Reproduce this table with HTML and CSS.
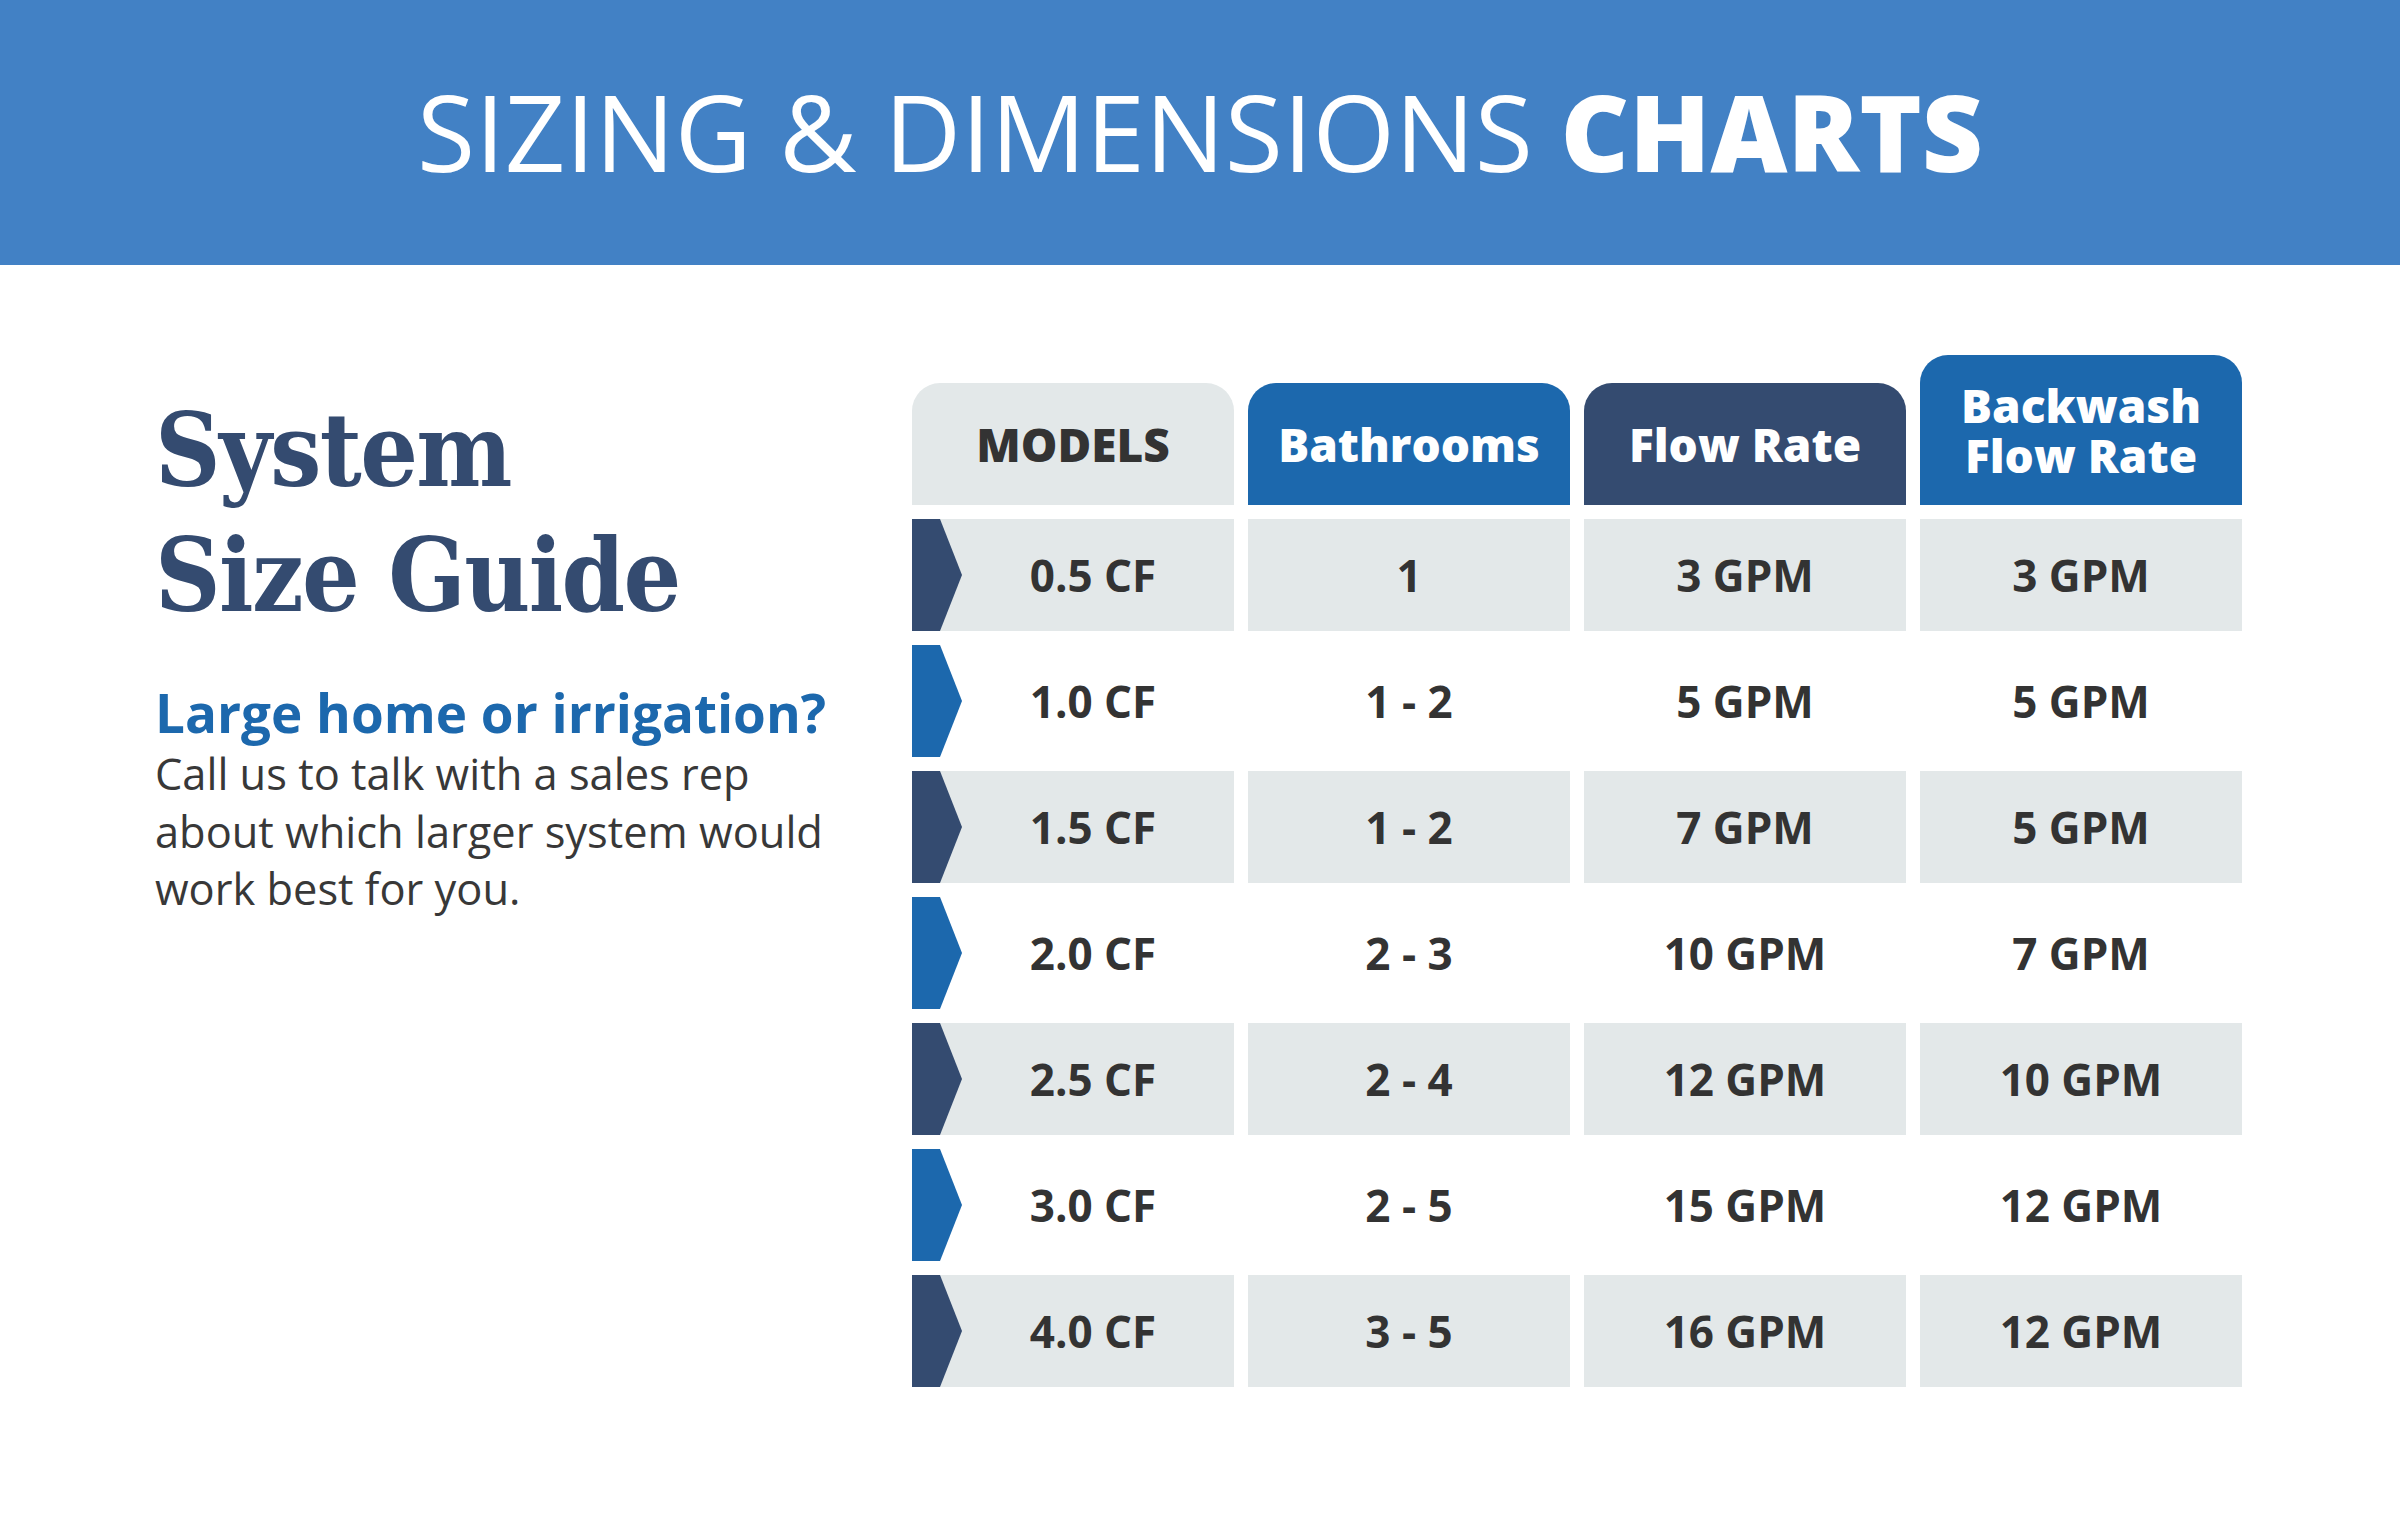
FILE: index.html
```html
<!DOCTYPE html>
<html lang="en">
<head>
<meta charset="utf-8">
<title>Sizing &amp; Dimensions Charts</title>
<link rel="stylesheet" href="styles.css">
</head>
<body>
<header class="band">
  <h1 class="band-title">SIZING &amp; DIMENSIONS <strong>CHARTS</strong></h1>
</header>
<main class="main">
  <section class="intro">
    <h2 class="guide-title">System<br>Size Guide</h2>
    <p class="lead">Large home or irrigation?</p>
    <p class="body-text">Call us to talk with a sales rep<br>about which larger system would<br>work best for you.</p>
  </section>
  <section class="chart">
    <div class="thead">
      <div class="th th-models">MODELS</div>
      <div class="th th-blue">Bathrooms</div>
      <div class="th th-navy">Flow Rate</div>
      <div class="th th-blue th-tall"><span class="th-line">Backwash</span><span class="th-line">Flow Rate</span></div>
    </div>
    <div class="row row-gray">
      <div class="cell cell-model"><span class="chev chev-navy"></span><span class="cell-text">0.5 CF</span></div>
      <div class="cell">1</div><div class="cell">3 GPM</div><div class="cell">3 GPM</div>
    </div>
    <div class="row">
      <div class="cell cell-model"><span class="chev chev-blue"></span><span class="cell-text">1.0 CF</span></div>
      <div class="cell">1 - 2</div><div class="cell">5 GPM</div><div class="cell">5 GPM</div>
    </div>
    <div class="row row-gray">
      <div class="cell cell-model"><span class="chev chev-navy"></span><span class="cell-text">1.5 CF</span></div>
      <div class="cell">1 - 2</div><div class="cell">7 GPM</div><div class="cell">5 GPM</div>
    </div>
    <div class="row">
      <div class="cell cell-model"><span class="chev chev-blue"></span><span class="cell-text">2.0 CF</span></div>
      <div class="cell">2 - 3</div><div class="cell">10 GPM</div><div class="cell">7 GPM</div>
    </div>
    <div class="row row-gray">
      <div class="cell cell-model"><span class="chev chev-navy"></span><span class="cell-text">2.5 CF</span></div>
      <div class="cell">2 - 4</div><div class="cell">12 GPM</div><div class="cell">10 GPM</div>
    </div>
    <div class="row">
      <div class="cell cell-model"><span class="chev chev-blue"></span><span class="cell-text">3.0 CF</span></div>
      <div class="cell">2 - 5</div><div class="cell">15 GPM</div><div class="cell">12 GPM</div>
    </div>
    <div class="row row-gray">
      <div class="cell cell-model"><span class="chev chev-navy"></span><span class="cell-text">4.0 CF</span></div>
      <div class="cell">3 - 5</div><div class="cell">16 GPM</div><div class="cell">12 GPM</div>
    </div>
  </section>
</main>
</body>
</html>
```
FILE: styles.css
```css
html, body {
  margin: 0;
  padding: 0;
  background: #ffffff;
}
body {
  font-family: "Open Sans", "Noto Sans", sans-serif;
  color: #333333;
}
.band {
  height: 265px;
  background: #4281c5;
  display: flex;
  align-items: center;
  justify-content: center;
}
.band-title {
  margin: 0;
  color: #ffffff;
  font-size: 106px;
  font-weight: 500;
  line-height: 1;
  padding-bottom: 4px;
}
.band-title strong {
  font-weight: 800;
}
.main {
  display: flex;
  padding: 90px 0 0 155px;
}
.intro {
  width: 757px;
  margin-top: 33px;
}
.guide-title {
  margin: 0;
  font-family: "DejaVu Serif", serif;
  font-stretch: condensed;
  font-weight: 700;
  font-size: 101px;
  line-height: 125px;
  letter-spacing: -1.6px;
  color: #344b70;
}
.lead {
  margin: 42px 0 0;
  font-size: 53px;
  line-height: 65px;
  font-weight: 700;
  color: #1c68ad;
}
.body-text {
  margin: 0;
  font-size: 43.4px;
  line-height: 57.5px;
  font-weight: 400;
  color: #383838;
}
.chart {
  display: flex;
  flex-direction: column;
  gap: 14px;
}
.thead, .row {
  display: grid;
  grid-template-columns: repeat(4, 322px);
  column-gap: 14px;
}
.thead {
  align-items: end;
}
.th {
  height: 122px;
  border-radius: 28px 28px 0 0;
  display: flex;
  flex-direction: column;
  align-items: center;
  justify-content: center;
  text-align: center;
  font-size: 46px;
  font-weight: 800;
  line-height: 50px;
  color: #ffffff;
}
.th-line {
  display: block;
  height: 50px;
  line-height: 50px;
}
.th-tall {
  height: 150px;
}
.th-models {
  background: #e3e8e9;
  color: #333333;
}
.th-blue {
  background: #1c68ad;
}
.th-navy {
  background: #344b70;
}
.row {
  height: 112px;
}
.cell {
  display: flex;
  align-items: center;
  justify-content: center;
  font-size: 44px;
  font-weight: 700;
  color: #333333;
}
.row-gray .cell {
  background: #e3e8e9;
}
.cell-model {
  justify-content: flex-start;
}
.chev {
  width: 50px;
  height: 100%;
  flex: none;
  clip-path: polygon(0 0, 28px 0, 50px 50%, 28px 100%, 0 100%);
}
.chev-navy {
  background: #344b70;
}
.chev-blue {
  background: #1c68ad;
}
.cell-text {
  flex: 1;
  text-align: center;
  padding-right: 10px;
}
```
